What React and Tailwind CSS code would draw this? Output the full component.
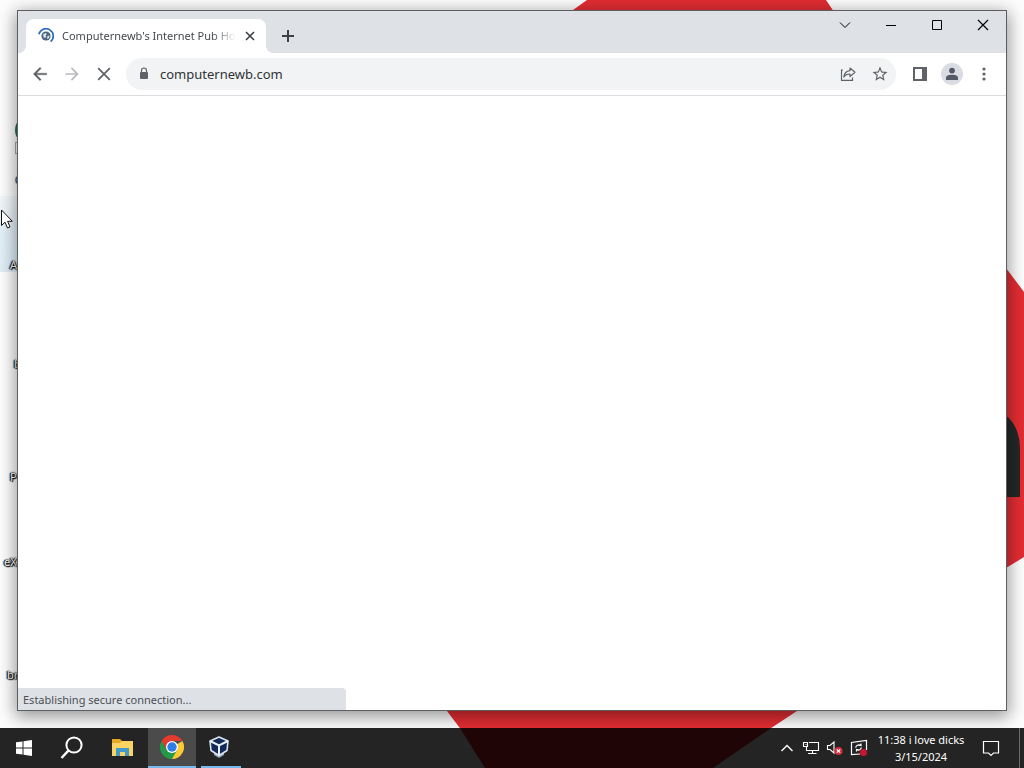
import React from "react";

const glyph = "text-[#5f6368] shrink-0";

function Wallpaper() {
  return (
    <svg
      className="absolute inset-0 w-full h-full"
      viewBox="0 0 1024 768"
      preserveAspectRatio="none"
      aria-hidden="true"
    >
      <defs>
        <linearGradient id="selection" x1="0" y1="0" x2="0" y2="1">
          <stop offset="0" stopColor="#f2f7fa" />
          <stop offset="0.5" stopColor="#e3f0f8" />
          <stop offset="1" stopColor="#e0eef7" />
        </linearGradient>
      </defs>
      <rect width="1024" height="768" fill="#fdfdfd" />
      <path
        d="M587 0H826L1006 268L1024 292V557L1006 568L797 711L710 768H490L447 711L100 400L573 10Z"
        fill="#e32d33"
      />
      <path d="M990 408Q1020 416 1020 450V497H990Z" fill="#232826" />
      <rect x="0" y="196" width="18" height="76" fill="url(#selection)" />
    </svg>
  );
}

const label =
  "absolute whitespace-nowrap text-[11px] leading-4 text-white [text-shadow:0_0_2px_#000,0_0_2px_#000,1px_1px_1px_#000,-1px_0_1px_#000]";

function DesktopIcons() {
  return (
    <div className="absolute inset-0" aria-label="Desktop">
      <span className="absolute left-[15px] top-[115px] w-[30px] h-[30px] rounded-full bg-[#23734a]" />
      <span className="absolute left-[15px] top-[142px] w-3 h-3 border border-[#aaa] bg-white" />
      <span className={label + " left-[16px] top-[172px]"}>G</span>
      <span className={label + " left-[10px] top-[257px]"}>A</span>
      <span className={label + " left-[14px] top-[356px]"}>b</span>
      <span className={label + " left-[10px] top-[469px]"}>P</span>
      <span className={label + " left-[4px] top-[554px]"}>eX</span>
      <span className={label + " left-[7px] top-[667px]"}>br</span>
    </div>
  );
}

function WindowControls() {
  const btn = "w-[46px] h-7 grid place-items-center text-black";
  return (
    <div className="ml-auto flex self-start">
      <button className={btn} aria-label="Search tabs">
        <svg width="12" height="12" viewBox="0 0 12 12" fill="none" stroke="currentColor"><path d="M1 3.5L6 8.5L11 3.5" /></svg>
      </button>
      <button className={btn} aria-label="Minimize">
        <svg width="12" height="12" viewBox="0 0 12 12" fill="none" stroke="currentColor"><path d="M1 6.5H11" /></svg>
      </button>
      <button className={btn} aria-label="Maximize">
        <svg width="12" height="12" viewBox="0 0 12 12" fill="none" stroke="currentColor"><path d="M1.5 1.5H10.5V10.5H1.5Z" /></svg>
      </button>
      <button className={btn} aria-label="Close">
        <svg width="12" height="12" viewBox="0 0 12 12" fill="none" stroke="currentColor" strokeWidth="1.2"><path d="M1 1L11 11M11 1L1 11" /></svg>
      </button>
    </div>
  );
}

function TabStrip() {
  return (
    <div className="flex items-end h-[42px] bg-[#dee1e6] pl-2">
      <div className="relative flex items-center w-[240px] h-[34px] rounded-t-lg bg-white pl-3 pr-2">
        <span className="absolute -left-2 bottom-0 w-2 h-2 bg-[radial-gradient(circle_at_0_0,transparent_8px,#fff_8px)]" />
        <span className="absolute -right-2 bottom-0 w-2 h-2 bg-[radial-gradient(circle_at_100%_0,transparent_8px,#fff_8px)]" />
        <svg className="shrink-0" width="16" height="16" viewBox="0 0 16 16" aria-hidden="true">
          <circle cx="8" cy="8" r="4.6" fill="#49677f" />
          <path d="M5 6.5L7.5 5L9 6L7.5 7.5L8.5 9L6 10ZM9.5 8L11.5 7.5L11 10L9 11Z" fill="#dce7ed" />
          <path d="M.9 6.2A7.3 7.3 0 1 1 12.7 13.6" fill="none" stroke="#2667c4" strokeWidth="1.7" />
        </svg>
        <span className="ml-2 w-[174px] overflow-hidden whitespace-nowrap text-[11px] leading-4 text-[#45494d] [mask-image:linear-gradient(to_right,#000_150px,transparent_174px)]">
          Computernewb's Internet Pub Home
        </span>
        <button className="ml-1 -mr-1 grid place-items-center w-5 h-5 text-[#3c4043] shrink-0" aria-label="Close tab">
          <svg width="10" height="10" viewBox="0 0 10 10" fill="none" stroke="currentColor" strokeWidth="1.6"><path d="M1 1L9 9M9 1L1 9" /></svg>
        </button>
      </div>
      <button className="ml-2 mb-[3px] grid place-items-center w-7 h-7 text-[#3c4043]" aria-label="New tab">
        <svg width="14" height="14" viewBox="0 0 14 14" fill="none" stroke="currentColor" strokeWidth="2"><path d="M7 1V13M1 7H13" /></svg>
      </button>
      <WindowControls />
    </div>
  );
}

function Toolbar() {
  const btn = "grid place-items-center w-8 h-8 shrink-0 " + glyph;
  return (
    <div className="flex items-center h-[43px] bg-white border-b border-[#dadce0] px-[6px]">
      <button className={btn} aria-label="Back">
        <svg width="20" height="20" viewBox="0 0 24 24" fill="currentColor" stroke="currentColor" strokeWidth="0.4"><path d="M20 11H7.83l5.59-5.59L12 4l-8 8 8 8 1.41-1.41L7.83 13H20v-2z" /></svg>
      </button>
      <button className="grid place-items-center w-8 h-8 shrink-0 text-[#b8babd]" aria-label="Forward" disabled>
        <svg width="20" height="20" viewBox="0 0 24 24" fill="currentColor"><path d="M12 4l-1.41 1.41L16.17 11H4v2h12.17l-5.58 5.59L12 20l8-8z" /></svg>
      </button>
      <button className={btn} aria-label="Stop loading">
        <svg width="20" height="20" viewBox="0 0 24 24" fill="none" stroke="currentColor" strokeWidth="2.1"><path d="M5 5L19 19M19 5L5 19" /></svg>
      </button>
      <form className="ml-[6px] flex flex-1 min-w-0 items-center h-8 rounded-full bg-[#f1f3f4] pl-[10px]" onSubmit={(e) => e.preventDefault()}>
        <svg className={glyph} width="16" height="16" viewBox="0 0 16 16" aria-hidden="true">
          <rect x="4" y="6" width="8" height="7" rx="1" fill="currentColor" />
          <path d="M5.500 6.500V4.500A2.500 2.500 0 0 1 10.500 4.500V6.500" fill="none" stroke="currentColor" strokeWidth="1.200" />
        </svg>
        <input
          className="ml-2 flex-1 min-w-0 bg-transparent text-[13px] leading-5 text-[#303336] outline-none"
          aria-label="Address and search bar"
          defaultValue="computernewb.com"
        />
        <button type="button" className={btn} aria-label="Share this page">
          <svg width="16" height="16" viewBox="0 0 16 16" fill="none" stroke="currentColor" strokeWidth="1.2">
            <path d="M3 4H1.500V14.400H12.500V11.500" />
            <path d="M10 2L15 6.300L10 10.500V8Q6 7.800 3.800 11Q4.500 5.200 10 4.600Z" strokeLinejoin="round" />
          </svg>
        </button>
        <button type="button" className={btn} aria-label="Bookmark this tab">
          <svg width="18" height="18" viewBox="0 0 24 24" fill="currentColor"><path d="M22 9.240l-7.190-.620L12 2 9.190 8.630 2 9.240l5.460 4.730L5.820 21 12 17.270 18.180 21l-1.630-7.030L22 9.240zM12 15.400l-3.760 2.270 1-4.280-3.320-2.880 4.380-.380L12 6.100l1.710 4.040 4.380.380-3.320 2.880 1 4.280L12 15.400z" /></svg>
        </button>
      </form>
      <button className={"ml-2 " + btn} aria-label="Side panel">
        <svg width="16" height="16" viewBox="0 0 16 16" fill="currentColor"><path fillRule="evenodd" d="M1 1H15V15H1ZM3 3V13H10V3Z" /></svg>
      </button>
      <button className={btn} aria-label="Profile">
        <svg width="22" height="22" viewBox="0 0 22 22"><circle cx="11" cy="11" r="11" fill="#d9dce3" /><circle cx="11" cy="7.600" r="2.900" fill="#545966" /><path d="M5 17V14.800Q5 11.700 11 11.700T17 14.800V17Z" fill="#545966" /></svg>
      </button>
      <button className={btn} aria-label="Customize and control">
        <svg width="16" height="16" viewBox="0 0 16 16" fill="currentColor"><circle cx="8" cy="3" r="1.600" /><circle cx="8" cy="8" r="1.600" /><circle cx="8" cy="13" r="1.600" /></svg>
      </button>
    </div>
  );
}

function ChromeLogo() {
  return (
    <svg width="24" height="24" viewBox="0 0 24 24" aria-hidden="true">
      <path d="M12 12L22.400 6A12 12 0 0 1 12 24L9 20Z" fill="#fcc934" />
      <path d="M12 12L17.200 15L12 24A12 12 0 0 1 1.600 6L6.800 15Z" fill="#249a49" />
      <path d="M12 6H22.400A12 12 0 0 0 1.600 6L6.800 15Z" fill="#e33b2e" />
      <circle cx="12" cy="12" r="6" fill="#fff" />
      <circle cx="12" cy="12" r="4.700" fill="#2f7de9" />
    </svg>
  );
}

function Taskbar() {
  const tray = "grid place-items-center w-6 h-10 shrink-0";
  return (
    <footer className="relative flex h-10 items-center text-white overflow-hidden bg-[#242424]">
      <svg className="absolute inset-0 w-full h-full" viewBox="0 0 1024 40" preserveAspectRatio="none" aria-hidden="true">
        <path d="M460 0H771L713 40H485Z" fill="#200507" />
      </svg>
      <nav className="relative flex" aria-label="Applications">
        <button className="grid place-items-center w-12 h-10" aria-label="Start">
          <svg width="16" height="16" viewBox="0 0 16 16" fill="currentColor"><path d="M0 2.300L6.500 1.400V7.500H0ZM7.500 1.200L16 0V7.500H7.500ZM0 8.500H6.500V14.600L0 13.700ZM7.500 8.500H16V16L7.500 14.800Z" /></svg>
        </button>
        <button className="grid place-items-center w-12 h-10" aria-label="Search">
          <svg width="24" height="24" viewBox="0 0 24 24" fill="none" stroke="currentColor" strokeWidth="2"><circle cx="14" cy="9" r="7.600" /><path d="M8.600 14.400L1.500 22" strokeWidth="2.400" /></svg>
        </button>
        <button className="grid place-items-center w-[52px] h-10 pl-[2px]" aria-label="File Explorer">
          <svg width="24" height="24" viewBox="0 0 24 24">
            <path d="M1 3H9L11 5H22V20H1Z" fill="#e5a924" />
            <path d="M1 7H9L11 5H22V20H1Z" fill="#fbd364" />
            <path d="M5 12H18V20H14V16H9V20H5Z" fill="#419ac8" />
          </svg>
        </button>
        <button className="grid place-items-center w-12 h-10 bg-[#4b4b4b] border-b-2 border-[#76b9ed]" aria-label="Chrome"><ChromeLogo /></button>
        <button className="ml-[5px] grid place-items-center w-10 h-10 border-b-2 border-[#76b9ed]" aria-label="VirtualBox">
          <svg className="-ml-1" width="22" height="24" viewBox="0 0 22 24">
            <path d="M6 17L11 15L16 17V20L11 23L6 20Z" fill="#8fa9bc" />
            <path d="M11 2L20 6L19 15.500L11 20.500L3 15.500L2 6Z" fill="#122a55" stroke="#d8e5ef" strokeWidth="1.600" strokeLinejoin="round" />
            <path d="M2 6L11 10.500L20 6M11 10.500V20.500" fill="none" stroke="#e8f0f5" strokeWidth="2" />
          </svg>
        </button>
      </nav>
      <div className="relative ml-auto flex items-center">
        <button className={tray} aria-label="Show hidden icons">
          <svg width="14" height="14" viewBox="0 0 14 14" fill="none" stroke="currentColor" strokeWidth="1.400"><path d="M1.500 10L7 4.500L12.500 10" /></svg>
        </button>
        <button className={tray} aria-label="Network">
          <svg width="18" height="16" viewBox="0 0 18 16" fill="none" stroke="currentColor" strokeWidth="1.100"><path d="M7 2.500H16.500V10.500H4.500V7M10.500 10.500V13.500M6 13.500H14.500M1.500 2.500H5.500V6.500H1.500ZM3.500 4.500H4.500" /></svg>
        </button>
        <button className={tray} aria-label="Volume muted">
          <svg width="18" height="16" viewBox="0 0 18 16"><path d="M1.500 5.500H4L8 2V13L4 9.500H1.500Z" fill="none" stroke="#fff" strokeWidth="1.100" /><circle cx="12.500" cy="11" r="4" fill="#d92b3f" /><path d="M10.800 9.300L14.200 12.700M14.200 9.300L10.800 12.700" stroke="#fff" strokeWidth="1.200" /></svg>
        </button>
        <button className={tray} aria-label="Updates">
          <svg width="18" height="18" viewBox="0 0 18 18" fill="none" stroke="#fff" strokeWidth="1.200"><path d="M10 15L1.500 15.500V3.500L16.500 1.500V11" /><path d="M5.500 8.500Q7.500 4.500 11 6.500V4.500M11 6.500H8.500M11.500 8.500Q9.500 12.500 6.500 10.500V12.500M6.500 10.500H8.500" /><circle cx="13.500" cy="13.500" r="3.500" fill="#c9152f" stroke="none" /></svg>
        </button>
        <time className="w-[100px] text-center text-[11px] leading-[17px]">11:38 i love dicks<br />3/15/2024</time>
        <button className="grid place-items-center w-10 h-10" aria-label="Notifications">
          <svg width="18" height="18" viewBox="0 0 18 18" fill="none" stroke="currentColor" strokeWidth="1.200"><path d="M1.500 2.500H16.500V14H11.500L9 16.500L6.500 14H1.500Z" /></svg>
        </button>
        <button className="ml-2 w-[5px] h-10 border-l border-[#686868]" aria-label="Show desktop" />
      </div>
    </footer>
  );
}

export default function App() {
  return (
    <div className="relative flex flex-col min-h-screen overflow-hidden font-['Noto_Sans','Open_Sans',sans-serif]">
      <Wallpaper />
      <DesktopIcons />
      <main className="relative flex flex-1 flex-col pt-[10px] px-[17px] pb-[17px]">
        <section className="flex flex-1 flex-col bg-white border border-[#5c5e61] shadow-[0_4px_16px_2px_rgba(0,0,0,0.4)]" aria-label="Browser window">
          <TabStrip />
          <Toolbar />
          <div className="flex flex-1 items-end bg-white">
            <p className="w-[328px] h-[22px] rounded-tr-sm bg-[#dee1e6] pl-[5px] text-[11px] leading-6 text-[#4c5054]" role="status">
              Establishing secure connection...
            </p>
          </div>
        </section>
      </main>
      <Taskbar />
      <svg className="absolute left-px top-[209px]" width="12" height="20" viewBox="0 0 12 20" aria-hidden="true">
        <path d="M.5 1V16.500L4 13.200L6.500 19L9 17.900L6.600 12.300H11.300Z" fill="#fff" stroke="#111" />
      </svg>
    </div>
  );
}
